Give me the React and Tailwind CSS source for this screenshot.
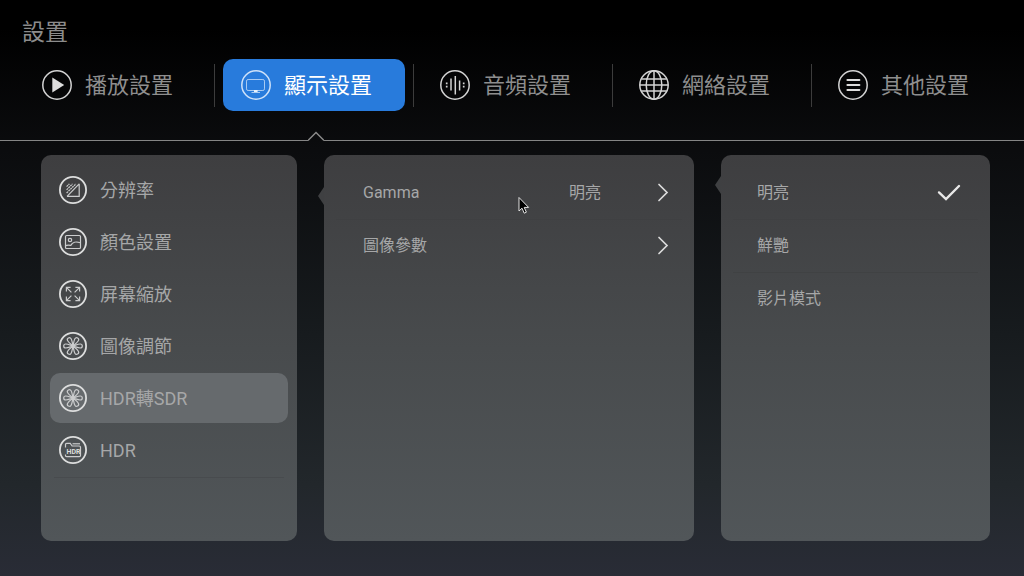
import { useState } from 'react';
import clsx from 'clsx';

const TABS = [
  { id: 'playback', label: '播放設置', Icon: PlayIcon },
  { id: 'display', label: '顯示設置', Icon: MonitorIcon },
  { id: 'audio', label: '音頻設置', Icon: AudioIcon },
  { id: 'network', label: '網絡設置', Icon: GlobeIcon },
  { id: 'other', label: '其他設置', Icon: MenuIcon },
];

const SECTIONS = [
  { id: 'resolution', label: '分辨率', Icon: ResolutionIcon },
  { id: 'color', label: '顏色設置', Icon: PictureIcon },
  { id: 'zoom', label: '屏幕縮放', Icon: ExpandIcon },
  { id: 'image', label: '圖像調節', Icon: FlowerIcon },
  { id: 'hdr2sdr', label: 'HDR轉SDR', Icon: FlowerIcon },
  { id: 'hdr', label: 'HDR', Icon: HdrIcon },
];

const MODES = ['明亮', '鮮艷', '影片模式'];

function PlayIcon() {
  return (
    <svg viewBox="0 0 30 30" className="size-[30px] shrink-0" fill="none" stroke="#d4d4d4" strokeWidth="1.5">
      <circle cx="15" cy="15" r="14.2" />
      <path d="M10.3 7.6v14.8L22.2 15z" fill="#dedede" stroke="none" />
    </svg>
  );
}

function MonitorIcon() {
  return (
    <svg viewBox="0 0 30 30" className="size-[30px] shrink-0" fill="none" stroke="#cfe2f9" strokeWidth="1.5">
      <circle cx="15" cy="15" r="14.2" />
      <rect x="5.5" y="9.5" width="18" height="11" rx="1.6" strokeWidth="1" stroke="#a9cbf3" />
      <path d="M10.5 22.5h8.5" strokeWidth="1" stroke="#a9cbf3" />
      <path d="M13 20h3.6v2H13z" fill="#e6f0fc" stroke="none" />
    </svg>
  );
}

function AudioIcon() {
  return (
    <svg viewBox="0 0 30 30" className="size-[30px] shrink-0" fill="none" stroke="#d4d4d4" strokeWidth="1.5">
      <circle cx="15" cy="15" r="14.2" />
      <path d="M15.3 6v18.5" />
      <path d="M11 8.6v11.8M19.6 10.6v10" />
      <path d="M6.7 12.6v1.6M6.7 15.8v1.6M23.7 12.6v1.6M23.7 15.8v1.6" strokeWidth="1.7" />
    </svg>
  );
}

function GlobeIcon() {
  return (
    <svg viewBox="0 0 30 30" className="size-[30px] shrink-0" fill="none" stroke="#d4d4d4" strokeWidth="1.5">
      <circle cx="15" cy="15" r="14.2" />
      <ellipse cx="15" cy="15" rx="7.8" ry="14.2" />
      <path d="M15 .8v28.4M.8 15h28.4M2.4 9h25.2M2.4 21h25.2" />
    </svg>
  );
}

function MenuIcon() {
  return (
    <svg viewBox="0 0 30 30" className="size-[30px] shrink-0" fill="none" stroke="#d4d4d4" strokeWidth="1.5">
      <circle cx="15" cy="15" r="14.2" />
      <path d="M9.4 10h12M9.4 15h12M9.4 20h12" stroke="#dedede" strokeWidth="2" strokeLinecap="round" />
    </svg>
  );
}

function RoundIcon({ children }) {
  return (
    <svg viewBox="0 0 28 28" className="size-7 shrink-0" fill="none" stroke="#cbcccd" strokeWidth="1.2">
      <circle cx="14" cy="14" r="13.1" strokeWidth="1.8" stroke="#dcdddd" />
      {children}
    </svg>
  );
}

function ResolutionIcon() {
  return (
    <RoundIcon>
      <path d="M8 20.3h12.2V7.8M8 20.3L20.2 7.8" />
      <path d="M7.6 17L17 7.8M7.6 13.8l6-6M7.6 10.6l2.8-2.8" strokeDasharray="2 .6" />
    </RoundIcon>
  );
}

function PictureIcon() {
  return (
    <RoundIcon>
      <rect x="6.5" y="7.5" width="15" height="13" rx="1" />
      <circle cx="11" cy="12" r="1.7" />
      <path d="M6.6 17.6c2-.9 3.6-.6 5.2-.2 2-3.6 4.4-4.2 9.600-2.600" />
    </RoundIcon>
  );
}

function ExpandIcon() {
  return (
    <RoundIcon>
      <path d="M12.400 12.400L7.600 7.600M15.600 12.400l4.800-4.800M12.400 15.600l-4.800 4.800M15.600 15.600l4.800 4.800" />
      <path d="M11.600 7.400H7.400v4.200M16.400 7.400h4.200v4.200M11.600 20.600H7.400v-4.200M16.400 20.600h4.200v-4.200" />
    </RoundIcon>
  );
}

function FlowerIcon() {
  const petals = [30, 90, 150, 210, 270, 330];
  return (
    <RoundIcon>
      {petals.map((angle) => (
        <path
          key={angle}
          d="M14 14C13 10.800 12 9 12 6.800C12 4 16 4 16 6.800C16 9 15 10.800 14 14z"
          transform={`rotate(${angle} 14 14)`}
        />
      ))}
    </RoundIcon>
  );
}

function HdrIcon() {
  return (
    <RoundIcon>
      <path d="M6.500 11.500V8.600c0-.8.400-1.200 1.200-1.200h3.600l1.800 2.600h7.200c.8 0 1.200.4 1.200 1.200v8.200c0 .8-.4 1.200-1.200 1.200H7.700c-.8 0-1.200-.4-1.200-1.200v-1" />
      <path d="M13.500 7.800h7.500" />
      <text
        x="14.500"
        y="18"
        textAnchor="middle"
        fill="#dcdddd"
        stroke="none"
        className="font-['Roboto',sans-serif] text-[7px] font-bold"
      >
        HDR
      </text>
    </RoundIcon>
  );
}

function Chevron() {
  return (
    <svg viewBox="0 0 12 20" className="h-5 w-3 shrink-0" fill="none" stroke="#dcdcdc" strokeWidth="1.7">
      <path d="M2 1.500l8 8-8 8" strokeLinecap="round" />
    </svg>
  );
}

function Check() {
  return (
    <svg viewBox="0 0 24 18" className="h-[18px] w-6 shrink-0" fill="none" stroke="#e8e8e8" strokeWidth="2.4">
      <path d="M2 8.400l7 6.600L22 2" strokeLinecap="round" />
    </svg>
  );
}

function Panel({ as: Tag = 'section', label, className, notch, children }) {
  return (
    <Tag
      aria-label={label}
      className={clsx('relative flex min-w-0 flex-col rounded-[10px] bg-linear-to-b from-[#3e3e40] via-[#484b4d] to-[#515659]', className)}
    >
      {notch && (
        <svg viewBox="0 0 6 18" className={clsx('absolute right-full h-[18px] w-1.5', notch)} fill="#3f4042">
          <path d="M6 0v18L0 9z" />
        </svg>
      )}
      {children}
    </Tag>
  );
}

export default function App() {
  const [tab, setTab] = useState('display');
  const [section, setSection] = useState('hdr2sdr');
  const [mode, setMode] = useState('明亮');

  return (
    <div
      lang="zh-Hant"
      className="relative flex min-h-screen flex-col bg-[linear-gradient(#000_5%,#0b0c0e_26%,#171b1e_58%,#22272b_84%,#292c36)] font-['Roboto','Noto_Sans_CJK_TC',sans-serif] text-[#a6a7a8]"
    >
      <h1 className="px-[22px] pt-[17px] text-[23px] leading-8 text-[#8c8c8c]">設置</h1>

      <nav className="mt-[10px] flex pr-[13px] pl-4">
        {TABS.map(({ id, label, Icon }, i) => (
          <div key={id} className="flex min-w-0 flex-1 items-center">
            <button
              type="button"
              aria-current={tab === id ? 'page' : undefined}
              onClick={() => setTab(id)}
              className={clsx(
                'mx-2 flex h-[52px] min-w-0 flex-1 items-center gap-[13px] rounded-[10px] pl-[18px] text-[22px] whitespace-nowrap',
                tab === id ? 'bg-[#287bdc] text-white' : 'text-[#8e8e8e]'
              )}
            >
              <Icon />
              {label}
            </button>
            {i < TABS.length - 1 && <span className="h-[43px] w-px bg-[#3c3c3c]" />}
          </div>
        ))}
      </nav>

      {/* rule with a small peak under the active tab */}
      <div className="mt-5 flex h-[10px] items-end">
        <span className="h-px w-[17px] bg-[#858585]" />
        {TABS.map(({ id }) => (
          <div key={id} className="flex flex-1 items-end">
            <span className="h-px flex-1 bg-[#858585]" />
            {tab === id && (
              <svg viewBox="0 0 16 10" className="h-[10px] w-4 shrink-0" fill="none" stroke="#8c8c8c" strokeWidth="1.4">
                <path d="M0 9.5l8-8 8 8" />
              </svg>
            )}
            <span className="h-px flex-1 bg-[#858585]" />
          </div>
        ))}
        <span className="h-px w-3 bg-[#858585]" />
      </div>

      <main className="mt-[14px] mb-[35px] grid flex-1 grid-cols-[256fr_370fr_269fr] gap-[27px] pr-[34px] pl-[41px]">
        <Panel as="nav" label="顯示設置" className="gap-0.5 px-[9px] pt-[10px]">
          {SECTIONS.map(({ id, label, Icon }) => (
            <button
              key={id}
              type="button"
              onClick={() => setSection(id)}
              className={clsx(
                'flex h-[50px] items-center gap-[13px] rounded-[10px] pl-[9px] text-left text-[18px] whitespace-nowrap',
                section === id && 'bg-[#666a6d]'
              )}
            >
              <Icon />
              {label}
            </button>
          ))}
          <span className="mx-1 h-px bg-[#484b4e]" />
        </Panel>

        <Panel label="HDR轉SDR" notch="top-8" className="px-3 pt-3">
          <button type="button" className="flex h-[53px] items-center border-b border-[#3e3f41]/60 pr-[13px] pl-[27px] text-base">
            <span className="flex-1 text-left">Gamma</span>
            <span className="mr-14">{mode}</span>
            <Chevron />
          </button>
          <button type="button" className="flex h-[53px] items-center border-b border-transparent pr-[13px] pl-[27px] text-base">
            <span className="flex-1 text-left">圖像參數</span>
            <Chevron />
          </button>
        </Panel>

        <Panel label="Gamma" notch="top-[21px]" className="px-3 pt-3">
          {MODES.map((m) => (
            <button
              key={m}
              type="button"
              aria-pressed={mode === m}
              onClick={() => setMode(m)}
              className="flex h-[53px] items-center justify-between border-b border-[#3e3f41]/60 pr-[17px] pl-6 text-base last:border-transparent"
            >
              {m}
              {mode === m && <Check />}
            </button>
          ))}
        </Panel>
      </main>

      {/* pointer */}
      <svg
        viewBox="0 0 12 19"
        className="pointer-events-none absolute top-[196px] left-[518px] h-[19px] w-3"
        fill="#000"
        stroke="#e6e6e6"
        strokeWidth="1"
      >
        <path d="M1 1.5V15l3-2.8 2.2 5 2.2-1-2.2-4.8h4.4z" />
      </svg>
    </div>
  );
}
